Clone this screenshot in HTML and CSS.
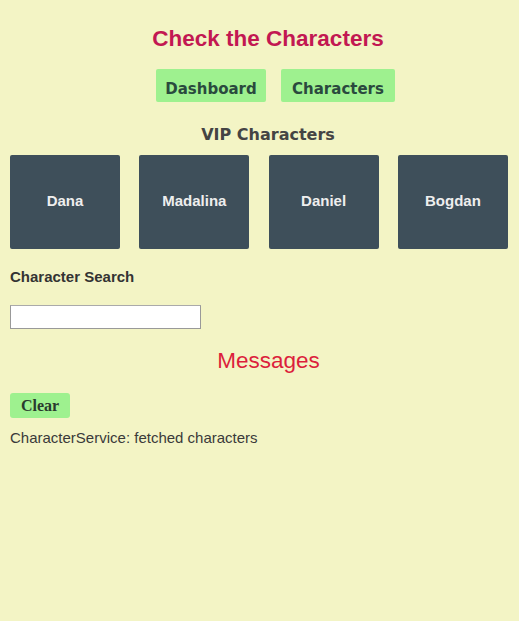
FILE: index.html
```html
<!DOCTYPE html>
<html>
<head>
<meta charset="utf-8">
<link rel="stylesheet" href="styles.css">
</head>
<body>
<h1 class="title">Check the Characters</h1>
<nav class="nav">
  <a class="nav-btn">Dashboard</a>
  <a class="nav-btn">Characters</a>
</nav>
<h3 class="vip">VIP Characters</h3>
<div class="grid">
  <div class="tile">Dana</div>
  <div class="tile">Madalina</div>
  <div class="tile">Daniel</div>
  <div class="tile">Bogdan</div>
</div>
<div class="search">
  <h4 class="search-label">Character Search</h4>
  <input class="search-box" type="text">
</div>
<div class="messages">
  <h2 class="messages-title">Messages</h2>
  <button class="clear">Clear</button>
  <div class="msg">CharacterService: fetched characters</div>
</div>
</body>
</html>
```
FILE: styles.css
```css
html, body {
  background: #f3f4c5;
}
body {
  margin: 0;
  padding: 0 10px;
  font-family: "Liberation Sans", Arial, sans-serif;
  color: #333;
}
.title {
  margin: 0;
  padding-top: 26px;
  padding-left: 17px;
  height: 29px;
  line-height: 26px;
  text-align: center;
  font-size: 22.5px;
  font-weight: bold;
  color: #c21852;
}
.nav {
  display: flex;
  justify-content: center;
  gap: 15px;
  margin-top: 14px;
  padding-left: 32px;
}
.nav-btn {
  display: block;
  box-sizing: border-box;
  height: 33px;
  padding-top: 4px;
  line-height: 33px;
  overflow: hidden;
  background: #9ef18f;
  color: #2a4a3e;
  font-family: "DejaVu Sans", sans-serif;
  font-weight: bold;
  font-size: 15px;
  border-radius: 2px;
  text-align: center;
}
.nav-btn:first-child { width: 110px; }
.nav-btn:last-child { width: 114px; }
.vip {
  margin: 0;
  margin-top: 20px;
  padding-left: 17px;
  height: 24px;
  line-height: 25px;
  text-align: center;
  font-family: "DejaVu Sans", sans-serif;
  font-size: 16px;
  font-weight: bold;
  color: #444;
}
.grid {
  display: grid;
  grid-template-columns: repeat(4, 110px);
  column-gap: 19.3px;
  margin-top: 9px;
}
.tile {
  box-sizing: border-box;
  height: 94px;
  padding-bottom: 4px;
  background: #3e4f5a;
  color: #eee;
  border-radius: 2px;
  display: flex;
  align-items: center;
  justify-content: center;
  font-weight: bold;
  font-size: 15px;
}
.search-label {
  margin: 0;
  margin-top: 19px;
  height: 18px;
  line-height: 18px;
  font-size: 15px;
  font-weight: bold;
  color: #333;
}
.search-box {
  display: block;
  box-sizing: border-box;
  margin-top: 19px;
  width: 191px;
  height: 24px;
  background: #fff;
  border: 1px solid #999;
  border-top-color: #aaa;
  padding: 0 4px;
}
.messages-title {
  margin: 0;
  margin-top: 18px;
  height: 28px;
  line-height: 28px;
  text-align: center;
  font-size: 22.5px;
  font-weight: normal;
  color: #dc1f3c;
  padding-left: 18px;
}
.clear {
  display: block;
  margin-top: 18px;
  width: 60px;
  height: 25px;
  border: none;
  border-radius: 3px;
  background: #9ef18f;
  color: #2a3a2e;
  font-family: "Liberation Serif", serif;
  font-weight: bold;
  font-size: 16px;
  padding: 0;
}
.msg {
  margin-top: 11px;
  font-size: 15px;
  line-height: 18px;
  color: #3a3a3a;
}
```
